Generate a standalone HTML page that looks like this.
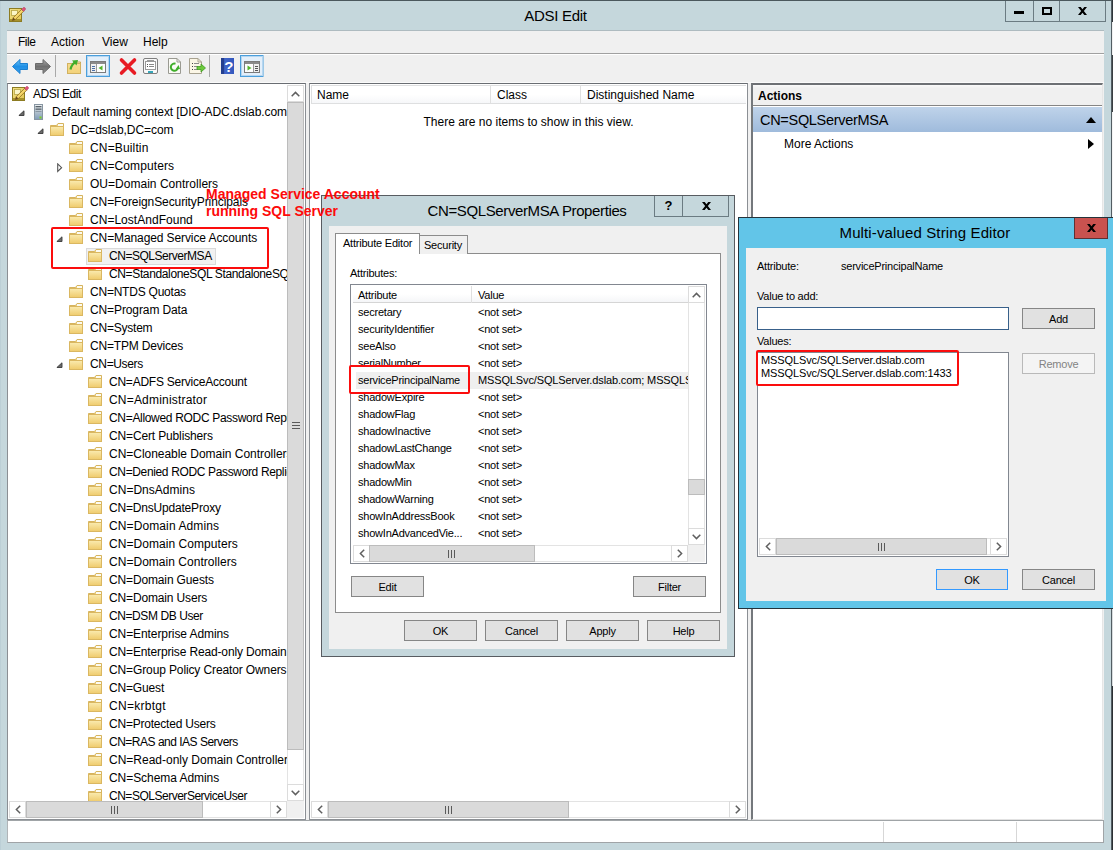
<!DOCTYPE html>
<html><head><meta charset="utf-8"><title>ADSI Edit</title>
<style>
*{box-sizing:border-box;margin:0;padding:0}
html,body{width:1113px;height:850px;overflow:hidden}
body{position:relative;background:#c5d7dc;font-family:"Liberation Sans",sans-serif;font-size:12px;color:#000}
.abs{position:absolute}
#frametop{left:0;top:0;width:1112px;height:1px;background:#4b585d}
#frameright{left:1111px;top:0;width:1px;height:850px;background:#525d63}
#frameleft{left:0;top:0;width:1px;height:850px;background:#bccfd6}
#edge{left:1112px;top:0;width:1px;height:850px;background:linear-gradient(#2f363a 22px,#f0f0f0 22px,#f0f0f0 55px,#3a3f42 55px,#3a3f42 112px,#f4f4f4 112px,#f4f4f4 609px,#d8dcde 609px,#d8dcde 686px,#2b3033 686px)}
#title{left:-1px;top:6px;width:1113px;text-align:center;font-size:15px;letter-spacing:-0.3px;line-height:20px;color:#000}
.cap{top:0;height:22px;border:1px solid #6b7b82;border-top:none;background:#c5d7dc}
#client{left:7px;top:30px;width:1097px;height:813px;background:#f0f0f0;border-top:1px solid #aebbc0}
#menubar{left:7px;top:30px;width:1097px;height:23px;background:#f0f0f0}
.mi{position:absolute;top:35px;font-size:12px;line-height:15px}
#tbsep{left:7px;top:53px;width:1097px;height:1px;background:#a0a0a0}
.pane{background:#fff;border:1px solid #8b8f94;border-top-color:#696d72}
.tr{position:absolute;left:0;width:280px;height:18px;white-space:nowrap}
.tr .tx{position:absolute;top:0;line-height:18px;font-size:12px;letter-spacing:-0.08px}
.tr .ic{position:absolute;top:1px;width:16px;height:16px}
.tr .ex{position:absolute;top:6px}
.selbox{position:absolute;top:1px;height:17px;background:#f1f1f1;border:1px solid #dadada}
.hsb,.vsb{background:#fff;border:1px solid #e3e3e3}
.hsb>*,.vsb>*{margin:-1px}
.sbb{background:#fff;border:1px solid #dcdcdc}
.thumb{background:#dadada;border:1px solid #bcbcbc}
.gripv{width:7px;height:8px;background:linear-gradient(90deg,#5a5a5a 1px,transparent 1px,transparent 3px,#5a5a5a 3px,#5a5a5a 4px,transparent 4px,transparent 6px,#5a5a5a 6px)}
.griph{width:8px;height:7px;background:linear-gradient(180deg,#5a5a5a 1px,transparent 1px,transparent 3px,#5a5a5a 3px,#5a5a5a 4px,transparent 4px,transparent 6px,#5a5a5a 6px)}
.corner{background:#f0f0f0}
.btn{position:absolute;height:21px;border:1px solid #868686;background:#e1e1e1;font-size:11px;text-align:center;line-height:20px;color:#000}
.dlgfont{font-size:11px;letter-spacing:-0.22px}
.selrow{background:#efefef}
.red{border:2px solid #fb0d0d;border-radius:2px}
</style></head><body>
<svg width="0" height="0" style="position:absolute">
<defs>
<linearGradient id="gfd" x1="0" y1="0" x2="0" y2="1"><stop offset="0" stop-color="#faebb0"/><stop offset="1" stop-color="#efcb6c"/></linearGradient>
<linearGradient id="gsv" x1="0" y1="0" x2="0" y2="1"><stop offset="0" stop-color="#eef1f3"/><stop offset=".45" stop-color="#b9c6d0"/><stop offset="1" stop-color="#7f9db9"/></linearGradient>
<linearGradient id="gpad" x1="0" y1="0" x2="1" y2="1"><stop offset="0" stop-color="#f3e28a"/><stop offset="1" stop-color="#e2c54e"/></linearGradient>
</defs></svg>

<!-- main window frame -->
<div class="abs" id="frameleft"></div><div class="abs" id="frameright"></div><div class="abs" id="edge"></div>
<svg class="abs" style="left:9px;top:7px" width="17" height="16" viewBox="0 0 17 16"><rect x="0.5" y="1.5" width="12" height="13" fill="url(#gpad)" stroke="#8d7c22"/><rect x="1" y="12" width="11" height="2" fill="#a8922c"/><rect x="2.5" y="3.5" width="6" height="5" fill="#fbf6c8" stroke="#b9a748" stroke-width=".8"/><path d="M3.2 13.800L4.3 10.600L12.6 2.300L14.6 4.300L6.3 12.600Z" fill="#f5d66a" stroke="#8a6a1c" stroke-width=".8"/><path d="M3.2 13.800L4.3 10.600L6.3 12.600Z" fill="#6a4a1a"/><path d="M12.6 2.300L14 0.900A1.4 1.4 0 0 1 16 2.900L14.6 4.300Z" fill="#e2557c" stroke="#b03358" stroke-width=".6"/></svg>
<div class="abs" id="title">ADSI Edit</div>
<div class="abs cap" style="left:1005px;width:29px"><div class="abs" style="left:8px;top:11px;width:10px;height:3px;background:#000"></div></div>
<div class="abs cap" style="left:1033px;width:27px;border-left:1px solid #6b7b82"><div class="abs" style="left:8px;top:7px;width:10px;height:8px;border:2px solid #000"></div></div>
<div class="abs cap" style="left:1059px;width:47px"><svg class="abs" style="left:18px;top:7px" width="9" height="8" viewBox="0 0 9 8"><path d="M0 0H2.7L4.5 2.3L6.3 0H9L5.85 4L9 8H6.3L4.5 5.7L2.7 8H0L3.15 4Z" fill="#000"/></svg></div>
<div class="abs" id="frametop"></div>
<div class="abs" id="client"></div>
<span class="mi" style="left:18px;letter-spacing:-0.5px">File</span><span class="mi" style="left:51px">Action</span><span class="mi" style="left:102px">View</span><span class="mi" style="left:143px">Help</span>
<div class="abs" id="tbsep"></div>
<div class="abs" style="left:7px;top:54px;width:1097px;height:1px;background:#fff"></div>
<div class="abs" style="left:7px;top:82px;width:1097px;height:1px;background:#fafafa"></div>
<!-- tree pane -->
<div class="abs pane" id="treepane" style="left:7px;top:83px;width:299px;height:737px;overflow:hidden">
<div class="abs" style="left:-8px;top:-84px;width:287px;height:801px;overflow:hidden">

<div class="tr" style="top:85px"><svg class="ic" style="left:12px;width:17px" viewBox="0 0 17 16"><rect x="0.5" y="1.5" width="12" height="13" fill="url(#gpad)" stroke="#8d7c22"/><rect x="1" y="12" width="11" height="2" fill="#a8922c"/><rect x="2.5" y="3.5" width="6" height="5" fill="#fbf6c8" stroke="#b9a748" stroke-width=".8"/><path d="M3.2 13.800L4.3 10.600L12.6 2.300L14.6 4.300L6.3 12.600Z" fill="#f5d66a" stroke="#8a6a1c" stroke-width=".8"/><path d="M3.2 13.800L4.3 10.600L6.3 12.600Z" fill="#6a4a1a"/><path d="M12.6 2.300L14 0.900A1.4 1.4 0 0 1 16 2.900L14.6 4.300Z" fill="#e2557c" stroke="#b03358" stroke-width=".6"/></svg><span class="tx" style="left:33px;letter-spacing:-0.469px">ADSI Edit</span></div>
<div class="tr" style="top:103px"><svg class="ex" style="left:18px;top:7px" width="7" height="6" viewBox="0 0 7 6"><path d="M6 0.8V5.5H0.9Z" fill="#6a6a6a" stroke="#3a3a3a" stroke-width="0.9" stroke-linejoin="round"/></svg><svg class="ic" style="left:31px;width:16px" viewBox="0 0 16 16"><rect x="3.5" y="0.5" width="8" height="15" fill="url(#gsv)" stroke="#8896a2"/><rect x="4.5" y="2" width="6" height="1.3" fill="#59636b"/><rect x="4.5" y="4.5" width="6" height="1.3" fill="#59636b"/><rect x="4.5" y="7" width="6" height="1" fill="#8a98a4"/><rect x="8.5" y="12.5" width="2" height="2" fill="#7ed321"/></svg><span class="tx" style="left:52px;letter-spacing:-0.076px">Default naming context [DIO-ADC.dslab.com</span></div>
<div class="tr" style="top:121px"><svg class="ex" style="left:37px;top:7px" width="7" height="6" viewBox="0 0 7 6"><path d="M6 0.8V5.5H0.9Z" fill="#6a6a6a" stroke="#3a3a3a" stroke-width="0.9" stroke-linejoin="round"/></svg><svg class="ic" style="left:50px;width:16px" viewBox="0 0 16 16"><path d="M0.5 3.5H6.5L8 1.5H13.5V13.5H0.5Z" fill="#f0d27a" stroke="#d6b45e"/><rect x="8" y="2" width="5" height="2.5" fill="#fcfbf2"/><rect x="0.5" y="4.5" width="13" height="9" fill="url(#gfd)" stroke="#dab761"/></svg><span class="tx" style="left:71px;letter-spacing:-0.058px">DC=dslab,DC=com</span></div>
<div class="tr" style="top:139px"><svg class="ic" style="left:69px;width:16px" viewBox="0 0 16 16"><path d="M0.5 3.5H6.5L8 1.5H13.5V13.5H0.5Z" fill="#f0d27a" stroke="#d6b45e"/><rect x="8" y="2" width="5" height="2.5" fill="#fcfbf2"/><rect x="0.5" y="4.5" width="13" height="9" fill="url(#gfd)" stroke="#dab761"/></svg><span class="tx" style="left:90px;letter-spacing:0.148px">CN=Builtin</span></div>
<div class="tr" style="top:157px"><svg class="ex" style="left:57px;top:6px" width="6" height="10" viewBox="0 0 6 10"><path d="M0.7 0.9L4.6 4.7L0.7 8.5Z" fill="#fff" stroke="#555" stroke-width="1.1"/></svg><svg class="ic" style="left:69px;width:16px" viewBox="0 0 16 16"><path d="M0.5 3.5H6.5L8 1.5H13.5V13.5H0.5Z" fill="#f0d27a" stroke="#d6b45e"/><rect x="8" y="2" width="5" height="2.5" fill="#fcfbf2"/><rect x="0.5" y="4.5" width="13" height="9" fill="url(#gfd)" stroke="#dab761"/></svg><span class="tx" style="left:90px;letter-spacing:0.089px">CN=Computers</span></div>
<div class="tr" style="top:175px"><svg class="ic" style="left:69px;width:16px" viewBox="0 0 16 16"><path d="M0.5 3.5H6.5L8 1.5H13.5V13.5H0.5Z" fill="#f0d27a" stroke="#d6b45e"/><rect x="8" y="2" width="5" height="2.5" fill="#fcfbf2"/><rect x="0.5" y="4.5" width="13" height="9" fill="url(#gfd)" stroke="#dab761"/></svg><span class="tx" style="left:90px;letter-spacing:0.019px">OU=Domain Controllers</span></div>
<div class="tr" style="top:193px"><svg class="ic" style="left:69px;width:16px" viewBox="0 0 16 16"><path d="M0.5 3.5H6.5L8 1.5H13.5V13.5H0.5Z" fill="#f0d27a" stroke="#d6b45e"/><rect x="8" y="2" width="5" height="2.5" fill="#fcfbf2"/><rect x="0.5" y="4.5" width="13" height="9" fill="url(#gfd)" stroke="#dab761"/></svg><span class="tx" style="left:90px;letter-spacing:-0.089px">CN=ForeignSecurityPrincipals</span></div>
<div class="tr" style="top:211px"><svg class="ic" style="left:69px;width:16px" viewBox="0 0 16 16"><path d="M0.5 3.5H6.5L8 1.5H13.5V13.5H0.5Z" fill="#f0d27a" stroke="#d6b45e"/><rect x="8" y="2" width="5" height="2.5" fill="#fcfbf2"/><rect x="0.5" y="4.5" width="13" height="9" fill="url(#gfd)" stroke="#dab761"/></svg><span class="tx" style="left:90px;letter-spacing:0.027px">CN=LostAndFound</span></div>
<div class="tr" style="top:229px"><svg class="ex" style="left:56px;top:7px" width="7" height="6" viewBox="0 0 7 6"><path d="M6 0.8V5.5H0.9Z" fill="#6a6a6a" stroke="#3a3a3a" stroke-width="0.9" stroke-linejoin="round"/></svg><svg class="ic" style="left:69px;width:16px" viewBox="0 0 16 16"><path d="M0.5 3.5H6.5L8 1.5H13.5V13.5H0.5Z" fill="#f0d27a" stroke="#d6b45e"/><rect x="8" y="2" width="5" height="2.5" fill="#fcfbf2"/><rect x="0.5" y="4.5" width="13" height="9" fill="url(#gfd)" stroke="#dab761"/></svg><span class="tx" style="left:90px;letter-spacing:-0.101px">CN=Managed Service Accounts</span></div>
<div class="tr" style="top:247px"><div class="selbox" style="left:86px;width:130px"></div><svg class="ic" style="left:88px;width:16px" viewBox="0 0 16 16"><path d="M0.5 3.5H6.5L8 1.5H13.5V13.5H0.5Z" fill="#f0d27a" stroke="#d6b45e"/><rect x="8" y="2" width="5" height="2.5" fill="#fcfbf2"/><rect x="0.5" y="4.5" width="13" height="9" fill="url(#gfd)" stroke="#dab761"/></svg><span class="tx" style="left:109px;letter-spacing:-0.467px">CN=SQLServerMSA</span></div>
<div class="tr" style="top:265px"><svg class="ic" style="left:88px;width:16px" viewBox="0 0 16 16"><path d="M0.5 3.5H6.5L8 1.5H13.5V13.5H0.5Z" fill="#f0d27a" stroke="#d6b45e"/><rect x="8" y="2" width="5" height="2.5" fill="#fcfbf2"/><rect x="0.5" y="4.5" width="13" height="9" fill="url(#gfd)" stroke="#dab761"/></svg><span class="tx" style="left:109px;letter-spacing:-0.361px">CN=StandaloneSQL StandaloneSQ</span></div>
<div class="tr" style="top:283px"><svg class="ic" style="left:69px;width:16px" viewBox="0 0 16 16"><path d="M0.5 3.5H6.5L8 1.5H13.5V13.5H0.5Z" fill="#f0d27a" stroke="#d6b45e"/><rect x="8" y="2" width="5" height="2.5" fill="#fcfbf2"/><rect x="0.5" y="4.5" width="13" height="9" fill="url(#gfd)" stroke="#dab761"/></svg><span class="tx" style="left:90px;letter-spacing:-0.224px">CN=NTDS Quotas</span></div>
<div class="tr" style="top:301px"><svg class="ic" style="left:69px;width:16px" viewBox="0 0 16 16"><path d="M0.5 3.5H6.5L8 1.5H13.5V13.5H0.5Z" fill="#f0d27a" stroke="#d6b45e"/><rect x="8" y="2" width="5" height="2.5" fill="#fcfbf2"/><rect x="0.5" y="4.5" width="13" height="9" fill="url(#gfd)" stroke="#dab761"/></svg><span class="tx" style="left:90px;letter-spacing:-0.109px">CN=Program Data</span></div>
<div class="tr" style="top:319px"><svg class="ic" style="left:69px;width:16px" viewBox="0 0 16 16"><path d="M0.5 3.5H6.5L8 1.5H13.5V13.5H0.5Z" fill="#f0d27a" stroke="#d6b45e"/><rect x="8" y="2" width="5" height="2.5" fill="#fcfbf2"/><rect x="0.5" y="4.5" width="13" height="9" fill="url(#gfd)" stroke="#dab761"/></svg><span class="tx" style="left:90px;letter-spacing:-0.216px">CN=System</span></div>
<div class="tr" style="top:337px"><svg class="ic" style="left:69px;width:16px" viewBox="0 0 16 16"><path d="M0.5 3.5H6.5L8 1.5H13.5V13.5H0.5Z" fill="#f0d27a" stroke="#d6b45e"/><rect x="8" y="2" width="5" height="2.5" fill="#fcfbf2"/><rect x="0.5" y="4.5" width="13" height="9" fill="url(#gfd)" stroke="#dab761"/></svg><span class="tx" style="left:90px;letter-spacing:-0.185px">CN=TPM Devices</span></div>
<div class="tr" style="top:355px"><svg class="ex" style="left:56px;top:7px" width="7" height="6" viewBox="0 0 7 6"><path d="M6 0.8V5.5H0.9Z" fill="#6a6a6a" stroke="#3a3a3a" stroke-width="0.9" stroke-linejoin="round"/></svg><svg class="ic" style="left:69px;width:16px" viewBox="0 0 16 16"><path d="M0.5 3.5H6.5L8 1.5H13.5V13.5H0.5Z" fill="#f0d27a" stroke="#d6b45e"/><rect x="8" y="2" width="5" height="2.5" fill="#fcfbf2"/><rect x="0.5" y="4.5" width="13" height="9" fill="url(#gfd)" stroke="#dab761"/></svg><span class="tx" style="left:90px;letter-spacing:-0.347px">CN=Users</span></div>
<div class="tr" style="top:373px"><svg class="ic" style="left:88px;width:16px" viewBox="0 0 16 16"><path d="M0.5 3.5H6.5L8 1.5H13.5V13.5H0.5Z" fill="#f0d27a" stroke="#d6b45e"/><rect x="8" y="2" width="5" height="2.5" fill="#fcfbf2"/><rect x="0.5" y="4.5" width="13" height="9" fill="url(#gfd)" stroke="#dab761"/></svg><span class="tx" style="left:109px;letter-spacing:-0.234px">CN=ADFS ServiceAccount</span></div>
<div class="tr" style="top:391px"><svg class="ic" style="left:88px;width:16px" viewBox="0 0 16 16"><path d="M0.5 3.5H6.5L8 1.5H13.5V13.5H0.5Z" fill="#f0d27a" stroke="#d6b45e"/><rect x="8" y="2" width="5" height="2.5" fill="#fcfbf2"/><rect x="0.5" y="4.5" width="13" height="9" fill="url(#gfd)" stroke="#dab761"/></svg><span class="tx" style="left:109px;letter-spacing:0.192px">CN=Administrator</span></div>
<div class="tr" style="top:409px"><svg class="ic" style="left:88px;width:16px" viewBox="0 0 16 16"><path d="M0.5 3.5H6.5L8 1.5H13.5V13.5H0.5Z" fill="#f0d27a" stroke="#d6b45e"/><rect x="8" y="2" width="5" height="2.5" fill="#fcfbf2"/><rect x="0.5" y="4.5" width="13" height="9" fill="url(#gfd)" stroke="#dab761"/></svg><span class="tx" style="left:109px;letter-spacing:-0.318px">CN=Allowed RODC Password Replication</span></div>
<div class="tr" style="top:427px"><svg class="ic" style="left:88px;width:16px" viewBox="0 0 16 16"><path d="M0.5 3.5H6.5L8 1.5H13.5V13.5H0.5Z" fill="#f0d27a" stroke="#d6b45e"/><rect x="8" y="2" width="5" height="2.5" fill="#fcfbf2"/><rect x="0.5" y="4.5" width="13" height="9" fill="url(#gfd)" stroke="#dab761"/></svg><span class="tx" style="left:109px;letter-spacing:-0.143px">CN=Cert Publishers</span></div>
<div class="tr" style="top:445px"><svg class="ic" style="left:88px;width:16px" viewBox="0 0 16 16"><path d="M0.5 3.5H6.5L8 1.5H13.5V13.5H0.5Z" fill="#f0d27a" stroke="#d6b45e"/><rect x="8" y="2" width="5" height="2.5" fill="#fcfbf2"/><rect x="0.5" y="4.5" width="13" height="9" fill="url(#gfd)" stroke="#dab761"/></svg><span class="tx" style="left:109px;letter-spacing:-0.031px">CN=Cloneable Domain Controllers</span></div>
<div class="tr" style="top:463px"><svg class="ic" style="left:88px;width:16px" viewBox="0 0 16 16"><path d="M0.5 3.5H6.5L8 1.5H13.5V13.5H0.5Z" fill="#f0d27a" stroke="#d6b45e"/><rect x="8" y="2" width="5" height="2.5" fill="#fcfbf2"/><rect x="0.5" y="4.5" width="13" height="9" fill="url(#gfd)" stroke="#dab761"/></svg><span class="tx" style="left:109px;letter-spacing:-0.353px">CN=Denied RODC Password Replication</span></div>
<div class="tr" style="top:481px"><svg class="ic" style="left:88px;width:16px" viewBox="0 0 16 16"><path d="M0.5 3.5H6.5L8 1.5H13.5V13.5H0.5Z" fill="#f0d27a" stroke="#d6b45e"/><rect x="8" y="2" width="5" height="2.5" fill="#fcfbf2"/><rect x="0.5" y="4.5" width="13" height="9" fill="url(#gfd)" stroke="#dab761"/></svg><span class="tx" style="left:109px;letter-spacing:0.026px">CN=DnsAdmins</span></div>
<div class="tr" style="top:499px"><svg class="ic" style="left:88px;width:16px" viewBox="0 0 16 16"><path d="M0.5 3.5H6.5L8 1.5H13.5V13.5H0.5Z" fill="#f0d27a" stroke="#d6b45e"/><rect x="8" y="2" width="5" height="2.5" fill="#fcfbf2"/><rect x="0.5" y="4.5" width="13" height="9" fill="url(#gfd)" stroke="#dab761"/></svg><span class="tx" style="left:109px;letter-spacing:-0.191px">CN=DnsUpdateProxy</span></div>
<div class="tr" style="top:517px"><svg class="ic" style="left:88px;width:16px" viewBox="0 0 16 16"><path d="M0.5 3.5H6.5L8 1.5H13.5V13.5H0.5Z" fill="#f0d27a" stroke="#d6b45e"/><rect x="8" y="2" width="5" height="2.5" fill="#fcfbf2"/><rect x="0.5" y="4.5" width="13" height="9" fill="url(#gfd)" stroke="#dab761"/></svg><span class="tx" style="left:109px;letter-spacing:0.11px">CN=Domain Admins</span></div>
<div class="tr" style="top:535px"><svg class="ic" style="left:88px;width:16px" viewBox="0 0 16 16"><path d="M0.5 3.5H6.5L8 1.5H13.5V13.5H0.5Z" fill="#f0d27a" stroke="#d6b45e"/><rect x="8" y="2" width="5" height="2.5" fill="#fcfbf2"/><rect x="0.5" y="4.5" width="13" height="9" fill="url(#gfd)" stroke="#dab761"/></svg><span class="tx" style="left:109px;letter-spacing:0.057px">CN=Domain Computers</span></div>
<div class="tr" style="top:553px"><svg class="ic" style="left:88px;width:16px" viewBox="0 0 16 16"><path d="M0.5 3.5H6.5L8 1.5H13.5V13.5H0.5Z" fill="#f0d27a" stroke="#d6b45e"/><rect x="8" y="2" width="5" height="2.5" fill="#fcfbf2"/><rect x="0.5" y="4.5" width="13" height="9" fill="url(#gfd)" stroke="#dab761"/></svg><span class="tx" style="left:109px;letter-spacing:0.031px">CN=Domain Controllers</span></div>
<div class="tr" style="top:571px"><svg class="ic" style="left:88px;width:16px" viewBox="0 0 16 16"><path d="M0.5 3.5H6.5L8 1.5H13.5V13.5H0.5Z" fill="#f0d27a" stroke="#d6b45e"/><rect x="8" y="2" width="5" height="2.5" fill="#fcfbf2"/><rect x="0.5" y="4.5" width="13" height="9" fill="url(#gfd)" stroke="#dab761"/></svg><span class="tx" style="left:109px;letter-spacing:-0.14px">CN=Domain Guests</span></div>
<div class="tr" style="top:589px"><svg class="ic" style="left:88px;width:16px" viewBox="0 0 16 16"><path d="M0.5 3.5H6.5L8 1.5H13.5V13.5H0.5Z" fill="#f0d27a" stroke="#d6b45e"/><rect x="8" y="2" width="5" height="2.5" fill="#fcfbf2"/><rect x="0.5" y="4.5" width="13" height="9" fill="url(#gfd)" stroke="#dab761"/></svg><span class="tx" style="left:109px;letter-spacing:-0.151px">CN=Domain Users</span></div>
<div class="tr" style="top:607px"><svg class="ic" style="left:88px;width:16px" viewBox="0 0 16 16"><path d="M0.5 3.5H6.5L8 1.5H13.5V13.5H0.5Z" fill="#f0d27a" stroke="#d6b45e"/><rect x="8" y="2" width="5" height="2.5" fill="#fcfbf2"/><rect x="0.5" y="4.5" width="13" height="9" fill="url(#gfd)" stroke="#dab761"/></svg><span class="tx" style="left:109px;letter-spacing:-0.42px">CN=DSM DB User</span></div>
<div class="tr" style="top:625px"><svg class="ic" style="left:88px;width:16px" viewBox="0 0 16 16"><path d="M0.5 3.5H6.5L8 1.5H13.5V13.5H0.5Z" fill="#f0d27a" stroke="#d6b45e"/><rect x="8" y="2" width="5" height="2.5" fill="#fcfbf2"/><rect x="0.5" y="4.5" width="13" height="9" fill="url(#gfd)" stroke="#dab761"/></svg><span class="tx" style="left:109px;letter-spacing:-0.084px">CN=Enterprise Admins</span></div>
<div class="tr" style="top:643px"><svg class="ic" style="left:88px;width:16px" viewBox="0 0 16 16"><path d="M0.5 3.5H6.5L8 1.5H13.5V13.5H0.5Z" fill="#f0d27a" stroke="#d6b45e"/><rect x="8" y="2" width="5" height="2.5" fill="#fcfbf2"/><rect x="0.5" y="4.5" width="13" height="9" fill="url(#gfd)" stroke="#dab761"/></svg><span class="tx" style="left:109px;letter-spacing:-0.142px">CN=Enterprise Read-only Domain Controllers</span></div>
<div class="tr" style="top:661px"><svg class="ic" style="left:88px;width:16px" viewBox="0 0 16 16"><path d="M0.5 3.5H6.5L8 1.5H13.5V13.5H0.5Z" fill="#f0d27a" stroke="#d6b45e"/><rect x="8" y="2" width="5" height="2.5" fill="#fcfbf2"/><rect x="0.5" y="4.5" width="13" height="9" fill="url(#gfd)" stroke="#dab761"/></svg><span class="tx" style="left:109px;letter-spacing:-0.119px">CN=Group Policy Creator Owners</span></div>
<div class="tr" style="top:679px"><svg class="ic" style="left:88px;width:16px" viewBox="0 0 16 16"><path d="M0.5 3.5H6.5L8 1.5H13.5V13.5H0.5Z" fill="#f0d27a" stroke="#d6b45e"/><rect x="8" y="2" width="5" height="2.5" fill="#fcfbf2"/><rect x="0.5" y="4.5" width="13" height="9" fill="url(#gfd)" stroke="#dab761"/></svg><span class="tx" style="left:109px;letter-spacing:-0.157px">CN=Guest</span></div>
<div class="tr" style="top:697px"><svg class="ic" style="left:88px;width:16px" viewBox="0 0 16 16"><path d="M0.5 3.5H6.5L8 1.5H13.5V13.5H0.5Z" fill="#f0d27a" stroke="#d6b45e"/><rect x="8" y="2" width="5" height="2.5" fill="#fcfbf2"/><rect x="0.5" y="4.5" width="13" height="9" fill="url(#gfd)" stroke="#dab761"/></svg><span class="tx" style="left:109px;letter-spacing:0.272px">CN=krbtgt</span></div>
<div class="tr" style="top:715px"><svg class="ic" style="left:88px;width:16px" viewBox="0 0 16 16"><path d="M0.5 3.5H6.5L8 1.5H13.5V13.5H0.5Z" fill="#f0d27a" stroke="#d6b45e"/><rect x="8" y="2" width="5" height="2.5" fill="#fcfbf2"/><rect x="0.5" y="4.5" width="13" height="9" fill="url(#gfd)" stroke="#dab761"/></svg><span class="tx" style="left:109px;letter-spacing:-0.215px">CN=Protected Users</span></div>
<div class="tr" style="top:733px"><svg class="ic" style="left:88px;width:16px" viewBox="0 0 16 16"><path d="M0.5 3.5H6.5L8 1.5H13.5V13.5H0.5Z" fill="#f0d27a" stroke="#d6b45e"/><rect x="8" y="2" width="5" height="2.5" fill="#fcfbf2"/><rect x="0.5" y="4.5" width="13" height="9" fill="url(#gfd)" stroke="#dab761"/></svg><span class="tx" style="left:109px;letter-spacing:-0.496px">CN=RAS and IAS Servers</span></div>
<div class="tr" style="top:751px"><svg class="ic" style="left:88px;width:16px" viewBox="0 0 16 16"><path d="M0.5 3.5H6.5L8 1.5H13.5V13.5H0.5Z" fill="#f0d27a" stroke="#d6b45e"/><rect x="8" y="2" width="5" height="2.5" fill="#fcfbf2"/><rect x="0.5" y="4.5" width="13" height="9" fill="url(#gfd)" stroke="#dab761"/></svg><span class="tx" style="left:109px;letter-spacing:-0.002px">CN=Read-only Domain Controllers</span></div>
<div class="tr" style="top:769px"><svg class="ic" style="left:88px;width:16px" viewBox="0 0 16 16"><path d="M0.5 3.5H6.5L8 1.5H13.5V13.5H0.5Z" fill="#f0d27a" stroke="#d6b45e"/><rect x="8" y="2" width="5" height="2.5" fill="#fcfbf2"/><rect x="0.5" y="4.5" width="13" height="9" fill="url(#gfd)" stroke="#dab761"/></svg><span class="tx" style="left:109px;letter-spacing:-0.057px">CN=Schema Admins</span></div>
<div class="tr" style="top:787px"><svg class="ic" style="left:88px;width:16px" viewBox="0 0 16 16"><path d="M0.5 3.5H6.5L8 1.5H13.5V13.5H0.5Z" fill="#f0d27a" stroke="#d6b45e"/><rect x="8" y="2" width="5" height="2.5" fill="#fcfbf2"/><rect x="0.5" y="4.5" width="13" height="9" fill="url(#gfd)" stroke="#dab761"/></svg><span class="tx" style="left:109px;letter-spacing:-0.485px">CN=SQLServerServiceUser</span></div>
</div>
<div class="abs vsb" style="left:279px;top:1px;width:17px;height:716px"><div class="abs sbb" style="left:0;top:0;width:17px;height:17px"><svg class="abs" style="left:50%;top:50%;margin:-3px 0 0 -5px" width="9" height="6" viewBox="0 0 9 6"><path d="M0.7 5.2L4.5 1.4L8.3 5.2" fill="none" stroke="#5f5f5f" stroke-width="1.5"/></svg></div><div class="abs sbb" style="left:0;bottom:0;width:17px;height:17px"><svg class="abs" style="left:50%;top:50%;margin:-3px 0 0 -5px" width="9" height="6" viewBox="0 0 9 6"><path d="M0.7 0.8L4.5 4.6L8.3 0.8" fill="none" stroke="#5f5f5f" stroke-width="1.5"/></svg></div><div class="abs thumb" style="left:0;top:17px;width:17px;height:648px"><div class="abs griph" style="left:50%;top:50%;margin:-4px 0 0 -4px"></div></div></div>
<div class="abs hsb" style="left:1px;top:717px;width:278px;height:17px"><div class="abs sbb" style="left:0;top:0;width:17px;height:17px"><svg class="abs" style="left:50%;top:50%;margin:-5px 0 0 -3px" width="6" height="9" viewBox="0 0 6 9"><path d="M5.2 0.7L1.4 4.5L5.2 8.3" fill="none" stroke="#5f5f5f" stroke-width="1.5"/></svg></div><div class="abs sbb" style="right:0;top:0;width:17px;height:17px"><svg class="abs" style="left:50%;top:50%;margin:-5px 0 0 -3px" width="6" height="9" viewBox="0 0 6 9"><path d="M0.8 0.7L4.6 4.5L0.8 8.3" fill="none" stroke="#5f5f5f" stroke-width="1.5"/></svg></div><div class="abs thumb" style="left:17px;top:0;width:177px;height:17px"><div class="abs gripv" style="left:50%;top:50%;margin:-4px 0 0 -4px"></div></div></div>
<div class="abs corner" style="left:279px;top:717px;width:17px;height:17px"></div>
</div>
<!-- middle pane -->
<div class="abs pane" id="midpane" style="left:309px;top:83px;width:439px;height:737px;overflow:hidden">
<div class="abs" style="left:1px;top:1px;width:435px;height:19px;background:linear-gradient(#fff,#fff 50%,#f6f7f9);border:1px solid #dedfe0;border-right:none"></div>
<span class="abs" style="left:7px;top:4px;line-height:15px">Name</span>
<span class="abs" style="left:187px;top:4px;line-height:15px">Class</span>
<span class="abs" style="left:277px;top:4px;line-height:15px">Distinguished Name</span>
<div class="abs" style="left:180px;top:1px;width:1px;height:18px;background:#e0e0e0"></div>
<div class="abs" style="left:270px;top:1px;width:1px;height:18px;background:#e0e0e0"></div>
<span class="abs" style="left:0;top:31px;width:437px;text-align:center;line-height:15px">There are no items to show in this view.</span>
<div class="abs hsb" style="left:1px;top:717px;width:435px;height:17px"><div class="abs sbb" style="left:0;top:0;width:17px;height:17px"><svg class="abs" style="left:50%;top:50%;margin:-5px 0 0 -3px" width="6" height="9" viewBox="0 0 6 9"><path d="M5.2 0.7L1.4 4.5L5.2 8.3" fill="none" stroke="#5f5f5f" stroke-width="1.5"/></svg></div><div class="abs sbb" style="right:0;top:0;width:17px;height:17px"><svg class="abs" style="left:50%;top:50%;margin:-5px 0 0 -3px" width="6" height="9" viewBox="0 0 6 9"><path d="M0.8 0.7L4.6 4.5L0.8 8.3" fill="none" stroke="#5f5f5f" stroke-width="1.5"/></svg></div><div class="abs thumb" style="left:17px;top:0;width:241px;height:17px"><div class="abs gripv" style="left:50%;top:50%;margin:-4px 0 0 -4px"></div></div></div>
</div>
<!-- actions pane -->
<div class="abs pane" id="actpane" style="left:751px;top:83px;width:352px;height:737px;overflow:hidden;border-left:2px solid #74787c;border-top:2px solid #6d7074;border-right-color:#e6e6e6;border-bottom-color:#e2e2e2">
<div class="abs" style="left:0;top:0;width:350px;height:21px;background:linear-gradient(#fafafa,#f0f0f0 3px);border-bottom:1px solid #858585"></div>
<span class="abs" style="left:5px;top:4px;font-weight:bold;line-height:15px">Actions</span>
<div class="abs" style="left:0;top:22px;width:350px;height:25px;background:linear-gradient(#bfd3ea,#9fbbdc)"></div>
<span class="abs" style="left:7px;top:26px;font-size:14.5px;letter-spacing:-0.3px;line-height:18px">CN=SQLServerMSA</span>
<svg class="abs" style="left:333px;top:32px" width="10" height="6"><path d="M0 6L5 0L10 6Z" fill="#000"/></svg>
<span class="abs" style="left:31px;top:52px;line-height:15px">More Actions</span>
<svg class="abs" style="left:335px;top:54px" width="6" height="10"><path d="M0 0L6 5L0 10Z" fill="#000"/></svg>
</div>
<!-- status bar -->
<div class="abs" style="left:7px;top:820px;width:1097px;height:23px;background:#fff;border:1px solid #a0a4a7;border-left-color:#b0b4b7"></div>
<div class="abs" style="left:883px;top:822px;width:1px;height:20px;background:#d7d7d7"></div>
<div class="abs" style="left:1016px;top:822px;width:1px;height:20px;background:#d7d7d7"></div>

<svg class="abs" id="tb" style="left:0;top:50px" width="280" height="34" viewBox="0 50 280 34">
<defs>
<linearGradient id="gb" x1="0" y1="0" x2="0" y2="1"><stop offset="0" stop-color="#6cc5f7"/><stop offset=".5" stop-color="#1e8fe6"/><stop offset="1" stop-color="#3aa0ea"/></linearGradient>
<linearGradient id="gg" x1="0" y1="0" x2="0" y2="1"><stop offset="0" stop-color="#a9a9a9"/><stop offset=".5" stop-color="#6f6f6f"/><stop offset="1" stop-color="#909090"/></linearGradient>
<linearGradient id="gf" x1="0" y1="0" x2="0" y2="1"><stop offset="0" stop-color="#f6dc8f"/><stop offset="1" stop-color="#f3d27a"/></linearGradient>
<linearGradient id="gh" x1="0" y1="0" x2="1" y2="0"><stop offset="0" stop-color="#2b4aa5"/><stop offset=".35" stop-color="#3f64c8"/><stop offset="1" stop-color="#3357bd"/></linearGradient>
</defs>
<!-- back -->
<path d="M12.5 66.5L20 59.5V63.5H27.5V69.5H20V73.5Z" fill="url(#gb)" stroke="#1b7fd0" stroke-width="1" stroke-linejoin="round"/>
<!-- forward -->
<path d="M50.5 66.5L43 59.5V63.5H35.5V69.5H43V73.5Z" fill="url(#gg)" stroke="#6a6a6a" stroke-width="1" stroke-linejoin="round"/>
<rect x="55" y="55" width="1" height="22" fill="#a9a9a9"/>
<!-- up folder -->
<path d="M67.5 63.5H73l1-1.5h6.500v2" fill="#f7ecc0" stroke="#c9a857"/>
<rect x="67.5" y="63.5" width="13" height="10" fill="url(#gf)" stroke="#d1b160"/>
<path d="M70.5 69.500C71.5 65 73 63.5 75 62.5" fill="none" stroke="#3fae2a" stroke-width="2.2"/>
<path d="M72 60.500L78 60L76.5 65.500Z" fill="#3fae2a"/>
<!-- checked 1 -->
<rect x="86.5" y="55.5" width="23" height="21" fill="#e3effa" stroke="#4a9fdc"/>
<rect x="87.5" y="56.5" width="21" height="19" fill="none" stroke="#b5d6f1"/>
<rect x="90.5" y="61.5" width="15" height="11" fill="#fdfdfd" stroke="#7b7b7b"/>
<rect x="91" y="62" width="14" height="2" fill="#8a8a8a"/>
<rect x="91" y="64" width="5" height="8" fill="#efefef"/><rect x="96" y="64" width="1" height="8" fill="#9a9a9a"/>
<rect x="92" y="66" width="3" height="1" fill="#4a6fa8"/><rect x="92" y="68" width="3" height="1" fill="#4a6fa8"/><rect x="92" y="70" width="3" height="1" fill="#4a6fa8"/>
<path d="M102.5 65.500V70.500L98.5 68Z" fill="#55b52c"/>
<!-- delete X -->
<path d="M121.5 60L134.5 73M134.5 60L121.5 73" stroke="#e81b23" stroke-width="3.6" stroke-linecap="round"/>
<!-- properties -->
<rect x="143.5" y="58.5" width="14" height="15" rx="1.5" fill="#f8f8f8" stroke="#7e7e7e"/>
<rect x="145.5" y="61.5" width="10" height="8" fill="#fff" stroke="#9a9a9a"/>
<rect x="147" y="60" width="7" height="2" fill="#9a9a9a"/>
<rect x="147" y="64" width="1" height="1" fill="#555"/><rect x="149" y="64" width="5" height="1" fill="#888"/>
<rect x="147" y="66" width="1" height="1" fill="#555"/><rect x="149" y="66" width="5" height="1" fill="#888"/>
<rect x="148" y="71" width="5" height="2" fill="#36a5b8"/>
<!-- refresh -->
<path d="M168.5 58.500H177l3.5 3.500V73.500H168.500Z" fill="#fbfbf6" stroke="#9a9a92"/>
<path d="M177 58.500V62H180.5" fill="none" stroke="#9a9a92"/>
<path d="M178 67.500A3.6 3.6 0 1 1 175.5 63.7" fill="none" stroke="#3fae2a" stroke-width="2"/>
<path d="M175.5 69.500L180 69L178.5 65Z" fill="#3fae2a"/>
<!-- export -->
<path d="M189.5 58.500H198l3.5 3.500V73.500H189.500Z" fill="#fbf6e6" stroke="#a8a290"/>
<path d="M198 58.500V62H201.5" fill="none" stroke="#a8a290"/>
<rect x="192" y="63" width="1" height="1" fill="#444"/><rect x="194" y="63" width="5" height="1" fill="#8a8a8a"/>
<rect x="192" y="66" width="1" height="1" fill="#444"/><rect x="194" y="66" width="4" height="1" fill="#8a8a8a"/>
<rect x="192" y="69" width="1" height="1" fill="#444"/><rect x="194" y="69" width="4" height="1" fill="#8a8a8a"/>
<path d="M197 66.500H201V64L205.5 68L201 72V69.500H197Z" fill="#6cc93c" stroke="#3f9a22" stroke-width=".8"/>
<rect x="209" y="55" width="1" height="22" fill="#a9a9a9"/>
<!-- help -->
<rect x="221" y="58" width="13" height="16" fill="url(#gh)"/>
<rect x="221" y="58" width="3" height="16" fill="#243f8f"/>
<text x="228.8" y="71.5" font-family="Liberation Sans, sans-serif" font-weight="bold" font-size="15" fill="#fff" text-anchor="middle">?</text>
<!-- checked 2 -->
<rect x="240.5" y="55.5" width="22.5" height="21" fill="#e3effa" stroke="#4a9fdc"/>
<rect x="241.5" y="56.5" width="21" height="19" fill="none" stroke="#b5d6f1"/>
<rect x="244.5" y="61.5" width="15" height="11" fill="#fdfdfd" stroke="#7b7b7b"/>
<rect x="245" y="62" width="14" height="2" fill="#8a8a8a"/>
<rect x="254" y="64" width="5" height="8" fill="#efefef"/><rect x="253" y="64" width="1" height="8" fill="#9a9a9a"/>
<rect x="255" y="66" width="3" height="1" fill="#555"/><rect x="255" y="68" width="3" height="1" fill="#555"/><rect x="255" y="70" width="3" height="1" fill="#555"/>
<path d="M247.5 65.500V70.500L251.5 68Z" fill="#55b52c"/>
</svg>

<!-- Properties dialog -->
<div class="abs" id="dlg1" style="left:321px;top:195px;width:414px;height:462px;background:#c5d7dc;border:1px solid #585c61"></div>
<div class="abs" style="left:321px;top:201px;width:414px;text-align:center;font-size:15px;letter-spacing:-0.38px;line-height:20px;padding-right:2px">CN=SQLServerMSA Properties</div>
<div class="abs cap" style="left:654px;top:196px;width:29px;height:21px;font-weight:bold;font-size:13px;text-align:center;line-height:19px">?</div>
<div class="abs cap" style="left:682px;top:196px;width:47px;height:21px"><svg class="abs" style="left:19px;top:6px" width="9" height="8" viewBox="0 0 9 8"><path d="M0 0H2.7L4.5 2.3L6.3 0H9L5.85 4L9 8H6.3L4.5 5.7L2.7 8H0L3.15 4Z" fill="#000"/></svg></div>
<div class="abs dlgfont" id="dlg1c" style="left:329px;top:226px;width:398px;height:423px;background:#f0f0f0">
<!-- tab page -->
<div class="abs" style="left:6px;top:27px;width:386px;height:360px;background:#fff;border:1px solid #8c8c8c"></div>
<div class="abs" style="left:90px;top:9px;width:49px;height:19px;background:#f0f0f0;border:1px solid #8c8c8c;border-bottom:none;line-height:19px;padding-left:4px">Security</div>
<div class="abs" style="left:6px;top:7px;width:85px;height:21px;background:#fff;border:1px solid #8c8c8c;border-bottom:none;line-height:19px;padding-left:7px">Attribute Editor</div>
<span class="abs" style="left:21px;top:40px;line-height:14px">Attributes:</span>
<!-- list -->
<div class="abs" style="left:21px;top:58px;width:357px;height:280px;background:#fff;border:1px solid #828790;overflow:hidden"><div class="abs" style="left:1px;top:0;width:354px;height:278px">
<div class="abs" style="left:1px;top:1px;width:335px;height:17px;background:linear-gradient(#fff,#fff 50%,#f5f6f8);border-bottom:1px solid #d5d5d5"></div>
<div class="abs" style="left:119px;top:1px;width:1px;height:17px;background:#e0e0e0"></div>
<span class="abs" style="left:6px;top:3px;line-height:14px">Attribute</span>
<span class="abs" style="left:126px;top:3px;line-height:14px">Value</span>
<span class="abs" style="left:6px;top:19px;line-height:17px;white-space:nowrap">secretary</span><span class="abs" style="left:126px;top:19px;line-height:17px;white-space:nowrap">&lt;not set&gt;</span>
<span class="abs" style="left:6px;top:36px;line-height:17px;white-space:nowrap">securityIdentifier</span><span class="abs" style="left:126px;top:36px;line-height:17px;white-space:nowrap">&lt;not set&gt;</span>
<span class="abs" style="left:6px;top:53px;line-height:17px;white-space:nowrap">seeAlso</span><span class="abs" style="left:126px;top:53px;line-height:17px;white-space:nowrap">&lt;not set&gt;</span>
<span class="abs" style="left:6px;top:70px;line-height:17px;white-space:nowrap">serialNumber</span><span class="abs" style="left:126px;top:70px;line-height:17px;white-space:nowrap">&lt;not set&gt;</span>
<div class="abs selrow" style="left:4px;top:87px;width:335px;height:17px"></div><span class="abs" style="left:6px;top:87px;line-height:17px;white-space:nowrap">servicePrincipalName</span><span class="abs" style="left:126px;top:87px;line-height:17px;white-space:nowrap;letter-spacing:-0.13px">MSSQLSvc/SQLServer.dslab.com; MSSQLSvc/SQLServer.dslab.com:1433</span>
<span class="abs" style="left:6px;top:104px;line-height:17px;white-space:nowrap">shadowExpire</span><span class="abs" style="left:126px;top:104px;line-height:17px;white-space:nowrap">&lt;not set&gt;</span>
<span class="abs" style="left:6px;top:121px;line-height:17px;white-space:nowrap">shadowFlag</span><span class="abs" style="left:126px;top:121px;line-height:17px;white-space:nowrap">&lt;not set&gt;</span>
<span class="abs" style="left:6px;top:138px;line-height:17px;white-space:nowrap">shadowInactive</span><span class="abs" style="left:126px;top:138px;line-height:17px;white-space:nowrap">&lt;not set&gt;</span>
<span class="abs" style="left:6px;top:155px;line-height:17px;white-space:nowrap">shadowLastChange</span><span class="abs" style="left:126px;top:155px;line-height:17px;white-space:nowrap">&lt;not set&gt;</span>
<span class="abs" style="left:6px;top:172px;line-height:17px;white-space:nowrap">shadowMax</span><span class="abs" style="left:126px;top:172px;line-height:17px;white-space:nowrap">&lt;not set&gt;</span>
<span class="abs" style="left:6px;top:189px;line-height:17px;white-space:nowrap">shadowMin</span><span class="abs" style="left:126px;top:189px;line-height:17px;white-space:nowrap">&lt;not set&gt;</span>
<span class="abs" style="left:6px;top:206px;line-height:17px;white-space:nowrap">shadowWarning</span><span class="abs" style="left:126px;top:206px;line-height:17px;white-space:nowrap">&lt;not set&gt;</span>
<span class="abs" style="left:6px;top:223px;line-height:17px;white-space:nowrap">showInAddressBook</span><span class="abs" style="left:126px;top:223px;line-height:17px;white-space:nowrap">&lt;not set&gt;</span>
<span class="abs" style="left:6px;top:240px;line-height:17px;white-space:nowrap">showInAdvancedVie...</span><span class="abs" style="left:126px;top:240px;line-height:17px;white-space:nowrap">&lt;not set&gt;</span>
<!-- scrollbars -->
<div class="abs" style="left:336px;top:1px;width:18px;height:258px;background:#fff"></div>
<div class="abs vsb" style="left:336px;top:1px;width:17px;height:259px"><div class="abs sbb" style="left:0;top:0;width:17px;height:17px"><svg class="abs" style="left:50%;top:50%;margin:-3px 0 0 -5px" width="9" height="6" viewBox="0 0 9 6"><path d="M0.7 5.2L4.5 1.4L8.3 5.2" fill="none" stroke="#5f5f5f" stroke-width="1.5"/></svg></div><div class="abs sbb" style="left:0;bottom:0;width:17px;height:17px"><svg class="abs" style="left:50%;top:50%;margin:-3px 0 0 -5px" width="9" height="6" viewBox="0 0 9 6"><path d="M0.7 0.8L4.5 4.6L8.3 0.8" fill="none" stroke="#5f5f5f" stroke-width="1.5"/></svg></div><div class="abs thumb" style="left:0;top:193px;width:17px;height:16px"></div></div>
<div class="abs hsb" style="left:1px;top:260px;width:335px;height:17px"><div class="abs sbb" style="left:0;top:0;width:17px;height:17px"><svg class="abs" style="left:50%;top:50%;margin:-5px 0 0 -3px" width="6" height="9" viewBox="0 0 6 9"><path d="M5.2 0.7L1.4 4.5L5.2 8.3" fill="none" stroke="#5f5f5f" stroke-width="1.5"/></svg></div><div class="abs sbb" style="right:0;top:0;width:17px;height:17px"><svg class="abs" style="left:50%;top:50%;margin:-5px 0 0 -3px" width="6" height="9" viewBox="0 0 6 9"><path d="M0.8 0.7L4.6 4.5L0.8 8.3" fill="none" stroke="#5f5f5f" stroke-width="1.5"/></svg></div><div class="abs thumb" style="left:16px;top:0;width:166px;height:17px"><div class="abs gripv" style="left:50%;top:50%;margin:-4px 0 0 -4px"></div></div></div>
<div class="abs corner" style="left:336px;top:260px;width:17px;height:17px"></div>
</div></div>
<div class="btn" style="left:22px;top:350px;width:73px">Edit</div>
<div class="btn" style="left:304px;top:350px;width:73px">Filter</div>
<div class="btn" style="left:75px;top:394px;width:73px">OK</div>
<div class="btn" style="left:156px;top:394px;width:73px">Cancel</div>
<div class="btn" style="left:237px;top:394px;width:73px">Apply</div>
<div class="btn" style="left:318px;top:394px;width:73px">Help</div>
</div>

<!-- Multi-valued String Editor -->
<div class="abs" id="dlg2" style="left:738px;top:217px;width:380px;height:392px;background:#62c5e8;border:1px solid #24333b"></div>
<div class="abs" style="left:746px;top:223px;width:358px;text-align:center;font-size:15px;letter-spacing:0.13px;line-height:20px">Multi-valued String Editor</div>
<div class="abs" style="left:1074px;top:218px;width:34px;height:21px;background:#c9524f;border:1px solid #5e3134;border-top:none"><svg class="abs" style="left:12px;top:6px" width="9" height="8" viewBox="0 0 9 8"><path d="M0 0H2.7L4.5 2.3L6.3 0H9L5.85 4L9 8H6.3L4.5 5.7L2.7 8H0L3.15 4Z" fill="#000"/></svg></div>
<div class="abs dlgfont" id="dlg2c" style="left:746px;top:248px;width:360px;height:353px;background:#f0f0f0">
<span class="abs" style="left:11px;top:11px;line-height:14px">Attribute:</span>
<span class="abs" style="left:95px;top:11px;line-height:14px;letter-spacing:-0.22px">servicePrincipalName</span>
<span class="abs" style="left:11px;top:41px;line-height:14px">Value to add:</span>
<div class="abs" style="left:11px;top:59px;width:252px;height:23px;background:#fff;border:1px solid #38608a"></div>
<div class="btn" style="left:276px;top:60px;width:73px">Add</div>
<span class="abs" style="left:11px;top:86px;line-height:14px">Values:</span>
<div class="abs" style="left:11px;top:104px;width:252px;height:205px;background:#fff;border:1px solid #828790;overflow:hidden">
<span class="abs" style="left:3px;top:1px;line-height:13px;white-space:nowrap;letter-spacing:-0.12px">MSSQLSvc/SQLServer.dslab.com</span>
<span class="abs" style="left:3px;top:14px;line-height:13px;white-space:nowrap;letter-spacing:-0.12px">MSSQLSvc/SQLServer.dslab.com:1433</span>
<div class="abs hsb" style="left:1px;top:185px;width:248px;height:17px"><div class="abs sbb" style="left:0;top:0;width:17px;height:17px"><svg class="abs" style="left:50%;top:50%;margin:-5px 0 0 -3px" width="6" height="9" viewBox="0 0 6 9"><path d="M5.2 0.7L1.4 4.5L5.2 8.3" fill="none" stroke="#5f5f5f" stroke-width="1.5"/></svg></div><div class="abs sbb" style="right:0;top:0;width:17px;height:17px"><svg class="abs" style="left:50%;top:50%;margin:-5px 0 0 -3px" width="6" height="9" viewBox="0 0 6 9"><path d="M0.8 0.7L4.6 4.5L0.8 8.3" fill="none" stroke="#5f5f5f" stroke-width="1.5"/></svg></div><div class="abs thumb" style="left:17px;top:0;width:211px;height:17px"><div class="abs gripv" style="left:50%;top:50%;margin:-4px 0 0 -4px"></div></div></div>
</div>
<div class="btn" style="left:276px;top:105px;width:73px;color:#838383;background:#f4f4f4;border-color:#b9b9b9">Remove</div>
<div class="btn" style="left:190px;top:321px;width:72px;border-color:#3399ff">OK</div>
<div class="btn" style="left:276px;top:321px;width:73px">Cancel</div>
</div>

<!-- annotations -->
<div class="abs red" style="left:51px;top:227px;width:218px;height:42px"></div>
<div class="abs red" style="left:349px;top:365px;width:121px;height:29px"></div>
<div class="abs red" style="left:756px;top:350px;width:203px;height:36px"></div>
<div class="abs" style="left:206px;top:186px;font-weight:bold;font-size:14px;line-height:17px;color:#fd0a0a;white-space:nowrap">Managed Service Account<br>running SQL Server</div>

</body></html>
